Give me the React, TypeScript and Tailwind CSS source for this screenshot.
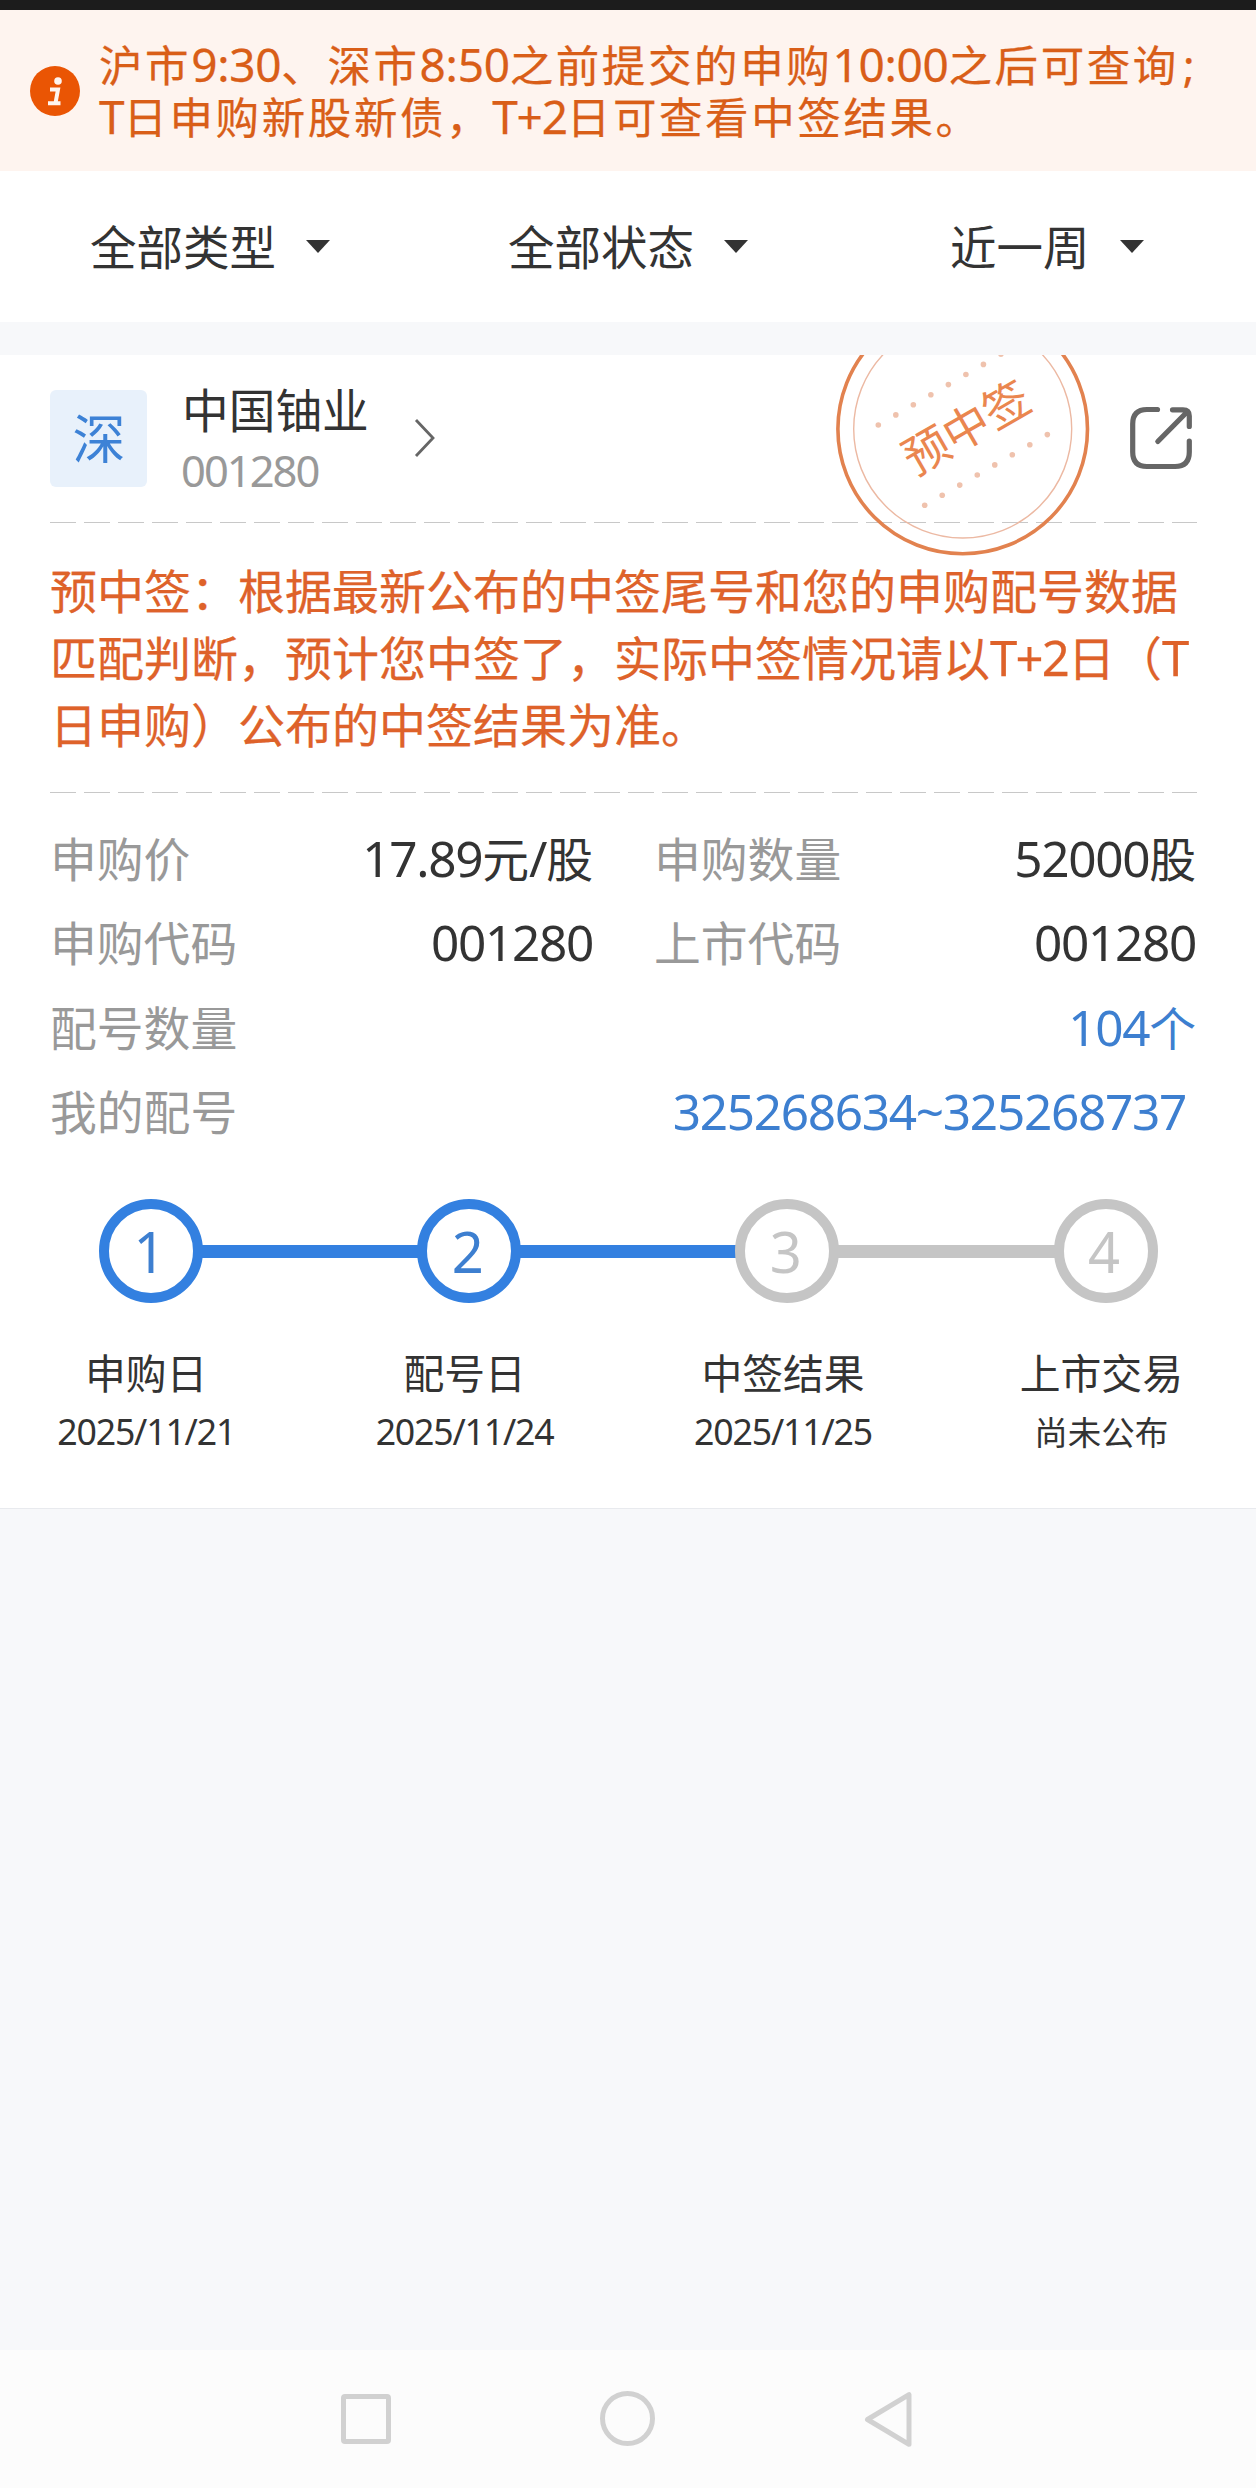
import React from "react";

/* Renders text, giving runs of Latin letters and digits a slightly larger size than the Chinese around them. */
function Mixed({ children, latin }: { children: string; latin: string }) {
  return (
    <>
      {children.split(/([0-9A-Z:.+~/]+)/).map((part, i) =>
        i % 2 ? (
          <span key={i} className={`leading-none ${latin}`}>
            {part}
          </span>
        ) : (
          part
        )
      )}
    </>
  );
}

function Filter({ label, className }: { label: string; className: string }) {
  return (
    <div className={`flex items-center gap-[30px] ${className}`}>
      <span>{label}</span>
      <svg width="24" height="13" viewBox="0 0 24 13" fill="#333">
        <path d="M0 0H24L12 13Z" />
      </svg>
    </div>
  );
}

function Dashes() {
  return (
    <div className="h-px w-[1147px] bg-[repeating-linear-gradient(90deg,#c8c8c8_0_26px,transparent_26px_34px)]" />
  );
}

function Stamp() {
  const dots = [0, 1, 2, 3, 4, 5, 6, 7];
  return (
    <svg className="absolute left-[833px] top-0" width="260" height="204" viewBox="833 355 260 204">
      <circle cx="962.7" cy="429" r="124.8" fill="none" stroke="#e2824f" strokeWidth="3.6" />
      <circle cx="962.7" cy="429" r="109" fill="none" stroke="#ecb9a3" strokeWidth="1.4" />
      {dots.map((i) => (
        <g key={i} fill="#efc2ad">
          <circle cx={878.3 + i * 17.52} cy={425 - i * 10.1} r="2.8" />
          <circle cx={924.7 + i * 17.52} cy={505.3 - i * 10.1} r="2.8" />
        </g>
      ))}
      <text
        x="966"
        y="444.5"
        textAnchor="middle"
        fontSize="46"
        fill="#ea864f"
        transform="rotate(-30 966 427)"
      >
        预中签
      </text>
    </svg>
  );
}

const num = "text-[49.5px] tracking-[-1.3px]";

function Row({ label, value }: { label: string; value: string }) {
  return (
    <div className="flex justify-between">
      <span className="text-[#999]">{label}</span>
      <span>
        <Mixed latin={num}>{value}</Mixed>
      </span>
    </div>
  );
}

const steps = [
  { n: "1", label: "申购日", date: "2025/11/21", ring: "border-[#3380e0] text-[#3d7fd0]", bar: "bg-[#3380e0]" },
  { n: "2", label: "配号日", date: "2025/11/24", ring: "border-[#3380e0] text-[#3d7fd0]", bar: "bg-[#3380e0]" },
  { n: "3", label: "中签结果", date: "2025/11/25", ring: "border-[#c5c5c5] text-[#c5c5c5]", bar: "bg-[#c5c5c5]" },
  { n: "4", label: "上市交易", date: "尚未公布", ring: "border-[#c5c5c5] text-[#c5c5c5]", bar: "" },
];

export default function App() {
  return (
    <div className="flex h-[2488px] w-[1256px] flex-col overflow-hidden whitespace-nowrap bg-[#f7f8fa] font-['Noto_Sans','Noto_Sans_CJK_SC',sans-serif] text-[#333]">
      <div className="h-[10px] shrink-0 bg-[#1c1c1c]" />

      <div className="flex h-[161px] shrink-0 bg-[#fef4ef] text-[43.5px] leading-[52px] tracking-[2.6px] text-[#d95e18] [-webkit-text-stroke:0.25px]">
        <svg className="ml-[30px] mt-[56px] shrink-0" width="50" height="50" viewBox="0 0 50 50">
          <circle cx="25" cy="25" r="25" fill="#ea5504" />
          <circle cx="28" cy="15" r="3.8" fill="#fef4ef" />
          <path d="M20 23.5H28L25.5 37M18 37.3H30.5" fill="none" stroke="#fef4ef" strokeWidth="4" />
        </svg>
        <div className="ml-[19px] mt-[29px]">
          <div>
            <Mixed latin="text-[46px] tracking-[-0.3px]">沪市9:30、深市8:50之前提交的申购10:00之后可查询</Mixed>
            <span className="ml-[4px]">;</span>
          </div>
          <div>
            <Mixed latin="text-[46px] tracking-[-1.2px]">T日申购新股新债，T+2日可查看中签结果。</Mixed>
          </div>
        </div>
      </div>

      <div className="flex h-[151px] shrink-0 items-center bg-white text-[46.5px] leading-[60px]">
        <Filter label="全部类型" className="ml-[90px]" />
        <Filter label="全部状态" className="ml-[178px]" />
        <Filter label="近一周" className="ml-[202px]" />
      </div>

      <div className="relative mt-[33px] h-[1154px] shrink-0 border-b border-[#e8eaee] bg-white pl-[50px]">
        <div className="flex h-[167px] items-start">
          <div className="mt-[35px] flex size-[97px] items-center justify-center rounded-md bg-[#e8f1fb] pl-px text-[53px] leading-[60px] text-[#3d82d6]">
            深
          </div>
          <div className="ml-[35px] mt-[25px] w-[190px]">
            <div className="text-[46.7px] leading-[60px]">中国铀业</div>
            <div className="-ml-px text-[43.5px] leading-[60px] tracking-[-2px] text-[#999]">001280</div>
          </div>
          <svg className="ml-[42px] mt-[63px]" width="22" height="40" viewBox="0 0 22 40">
            <path d="M2 2L19 20L2 38" fill="none" stroke="#666" strokeWidth="2.8" />
          </svg>
          <svg
            className="ml-[693px] mt-[51px]"
            width="64"
            height="64"
            viewBox="1129 406 64 64"
            fill="none"
            stroke="#666"
            strokeWidth="5.2"
            strokeLinecap="round"
            strokeLinejoin="round"
          >
            <path d="M1157.5 409.5H1147Q1132.7 409.5 1132.7 424V452Q1132.7 466.5 1147 466.5H1175Q1189.3 466.5 1189.3 452V441" />
            <path d="M1172.5 409.8H1183Q1189.3 409.8 1189.3 416V426.5M1157.8 441.5L1187 412" />
          </svg>
        </div>
        <Dashes />
        <div className="mt-[35px] text-[47px] leading-[67px] text-[#de622a] [-webkit-text-stroke:0.25px]">
          <div>预中签：根据最新公布的中签尾号和您的申购配号数据</div>
          <div>
            <Mixed latin="text-[49px] tracking-[-1.8px]">匹配判断，预计您中签了，实际中签情况请以T+2日（T</Mixed>
          </div>
          <div>日申购）公布的中签结果为准。</div>
        </div>
        <div className="mt-[33px]">
          <Dashes />
        </div>

        <div className="mt-[24px] grid w-[1147px] grid-cols-[543px_542px] gap-x-[61px] text-[46.8px] leading-[84.3px]">
          <Row label="申购价" value="17.89元/股" />
          <Row label="申购数量" value="52000股" />
          <Row label="申购代码" value="001280" />
          <Row label="上市代码" value="001280" />
        </div>
        <div className="w-[1146px] text-[46.8px] leading-[84.3px]">
          <div className="flex justify-between">
            <span className="text-[#999]">配号数量</span>
            <span className="text-[#3d7fd0]">
              <Mixed latin={num}>104个</Mixed>
            </span>
          </div>
          <div className="flex justify-between pr-[10px]">
            <span className="text-[#999]">我的配号</span>
            <span className="text-[#3d7fd0]">
              <Mixed latin={num}>325268634~325268737</Mixed>
            </span>
          </div>
        </div>

        <div className="ml-[49px] mt-[45px] flex items-center">
          {steps.map((s) => (
            <React.Fragment key={s.n}>
              <div
                className={`flex size-[104px] items-center justify-center rounded-full border-[10px] pr-[3px] text-[56px] leading-[60px] ${s.ring}`}
              >
                {s.n}
              </div>
              {s.bar && <div className={`-mx-[2px] h-[13px] w-[218.2px] ${s.bar}`} />}
            </React.Fragment>
          ))}
        </div>
        <div className="ml-[-63px] mt-[42px] flex text-center">
          {steps.map((s) => (
            <div key={s.n} className="w-[318.4px] shrink-0">
              <div className="text-[40.8px] leading-[56px]">{s.label}</div>
              <div className="mt-px text-[33.5px] leading-[60px]">
                <Mixed latin="text-[35.7px] tracking-[-1.2px]">{s.date}</Mixed>
              </div>
            </div>
          ))}
        </div>
      </div>

      <div className="mt-auto flex h-[138px] shrink-0 items-start bg-[#fcfcfc] pt-[41px]">
        <div className="ml-[341px] mt-[3px] size-[50px] rounded-[4px] border-[5px] border-[#d1d1d1]" />
        <div className="ml-[209px] size-[55px] rounded-full border-[5px] border-[#d1d1d1]" />
        <svg className="ml-[208px]" width="50" height="57" viewBox="863 2391 50 57">
          <path
            d="M867.5 2419.5L909 2394.7V2444.3Z"
            fill="none"
            stroke="#d1d1d1"
            strokeWidth="5"
            strokeLinejoin="round"
          />
        </svg>
      </div>

      {/* The stamp hangs over the card's header and first divider. */}
      <div className="absolute left-0 top-[355px]">
        <Stamp />
      </div>
    </div>
  );
}
